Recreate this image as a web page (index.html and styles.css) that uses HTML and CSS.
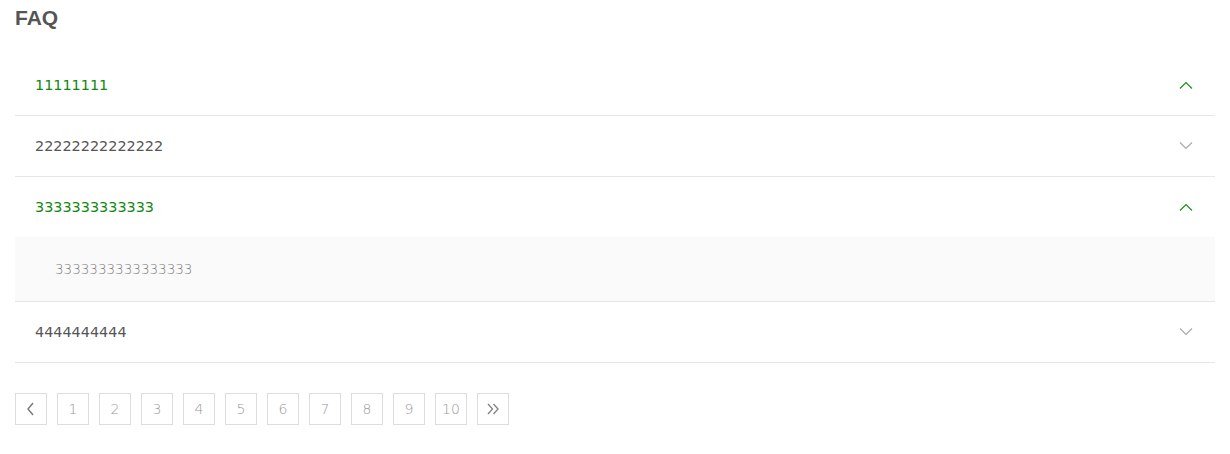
FILE: index.html
```html
<!DOCTYPE html>
<html>
<head>
<meta charset="utf-8">
<link rel="stylesheet" href="styles.css">
</head>
<body>
<div class="page">
  <h2 class="title">FAQ</h2>
  <div class="faq">
    <div class="item open">
      <div class="head"><span>11111111</span><svg class="chev" viewBox="0 0 14 8"><path d="M1 7.5L7 1.5L13 7.5"/></svg></div>
    </div>
    <div class="item">
      <div class="head"><span>22222222222222</span><svg class="chev" viewBox="0 0 14 8"><path d="M1 0.5L7 6.5L13 0.5"/></svg></div>
    </div>
    <div class="item open">
      <div class="head"><span>3333333333333</span><svg class="chev" viewBox="0 0 14 8"><path d="M1 7.5L7 1.5L13 7.5"/></svg></div>
      <div class="body">3333333333333333</div>
    </div>
    <div class="item">
      <div class="head"><span>4444444444</span><svg class="chev" viewBox="0 0 14 8"><path d="M1 0.5L7 6.5L13 0.5"/></svg></div>
    </div>
  </div>
  <div class="pager">
    <a class="pg"><svg class="arr" viewBox="0 0 10 14"><path d="M7 1L2 7L7 13"/></svg></a>
    <a class="pg">1</a>
    <a class="pg">2</a>
    <a class="pg">3</a>
    <a class="pg">4</a>
    <a class="pg">5</a>
    <a class="pg">6</a>
    <a class="pg">7</a>
    <a class="pg">8</a>
    <a class="pg">9</a>
    <a class="pg">10</a>
    <a class="pg"><svg class="arr2" viewBox="0 0 14 14"><path d="M2 2L6.5 7L2 12M7.5 2L12 7L7.5 12"/></svg></a>
  </div>
</div>
</body>
</html>
```

FILE: styles.css
```css
html, body {
  margin: 0;
  padding: 0;
  background: #fff;
}
.page {
  padding: 0 15px;
  font-family: "DejaVu Sans", sans-serif;
}
.title {
  margin: 0;
  padding-top: 6px;
  height: 55px;
  box-sizing: border-box;
  font-family: "Liberation Sans", Arial, sans-serif;
  font-weight: bold;
  font-size: 21px;
  line-height: 24px;
  color: #555;
}
.faq {
  display: flex;
  flex-direction: column;
}
.item {
  border-bottom: 1px solid #e6e6e6;
}
.head {
  height: 60px;
  display: flex;
  align-items: center;
  justify-content: space-between;
  padding: 0 22px 0 20px;
  font-size: 14.4px;
  color: #555;
}
.item.open .head {
  color: #118811;
}
.chev {
  width: 14px;
  height: 8px;
  fill: none;
  stroke: #aaa;
  stroke-width: 1.2;
}
.item.open .chev {
  stroke: #1d8f1d;
}
.body {
  background: #fafafa;
  height: 64px;
  display: flex;
  align-items: center;
  padding-left: 40px;
  font-size: 13.5px;
  font-weight: 200;
  color: #777;
}
.pager {
  display: flex;
  gap: 10px;
  margin-top: 30px;
}
.pg {
  width: 32px;
  height: 32px;
  box-sizing: border-box;
  border: 1px solid #ddd;
  display: flex;
  align-items: center;
  justify-content: center;
  font-size: 14px;
  font-weight: 200;
  color: #999;
}
.arr {
  width: 10px;
  height: 14px;
  fill: none;
  stroke: #777;
  stroke-width: 1.4;
}
.arr2 {
  width: 14px;
  height: 14px;
  fill: none;
  stroke: #888;
  stroke-width: 1.4;
}
```
